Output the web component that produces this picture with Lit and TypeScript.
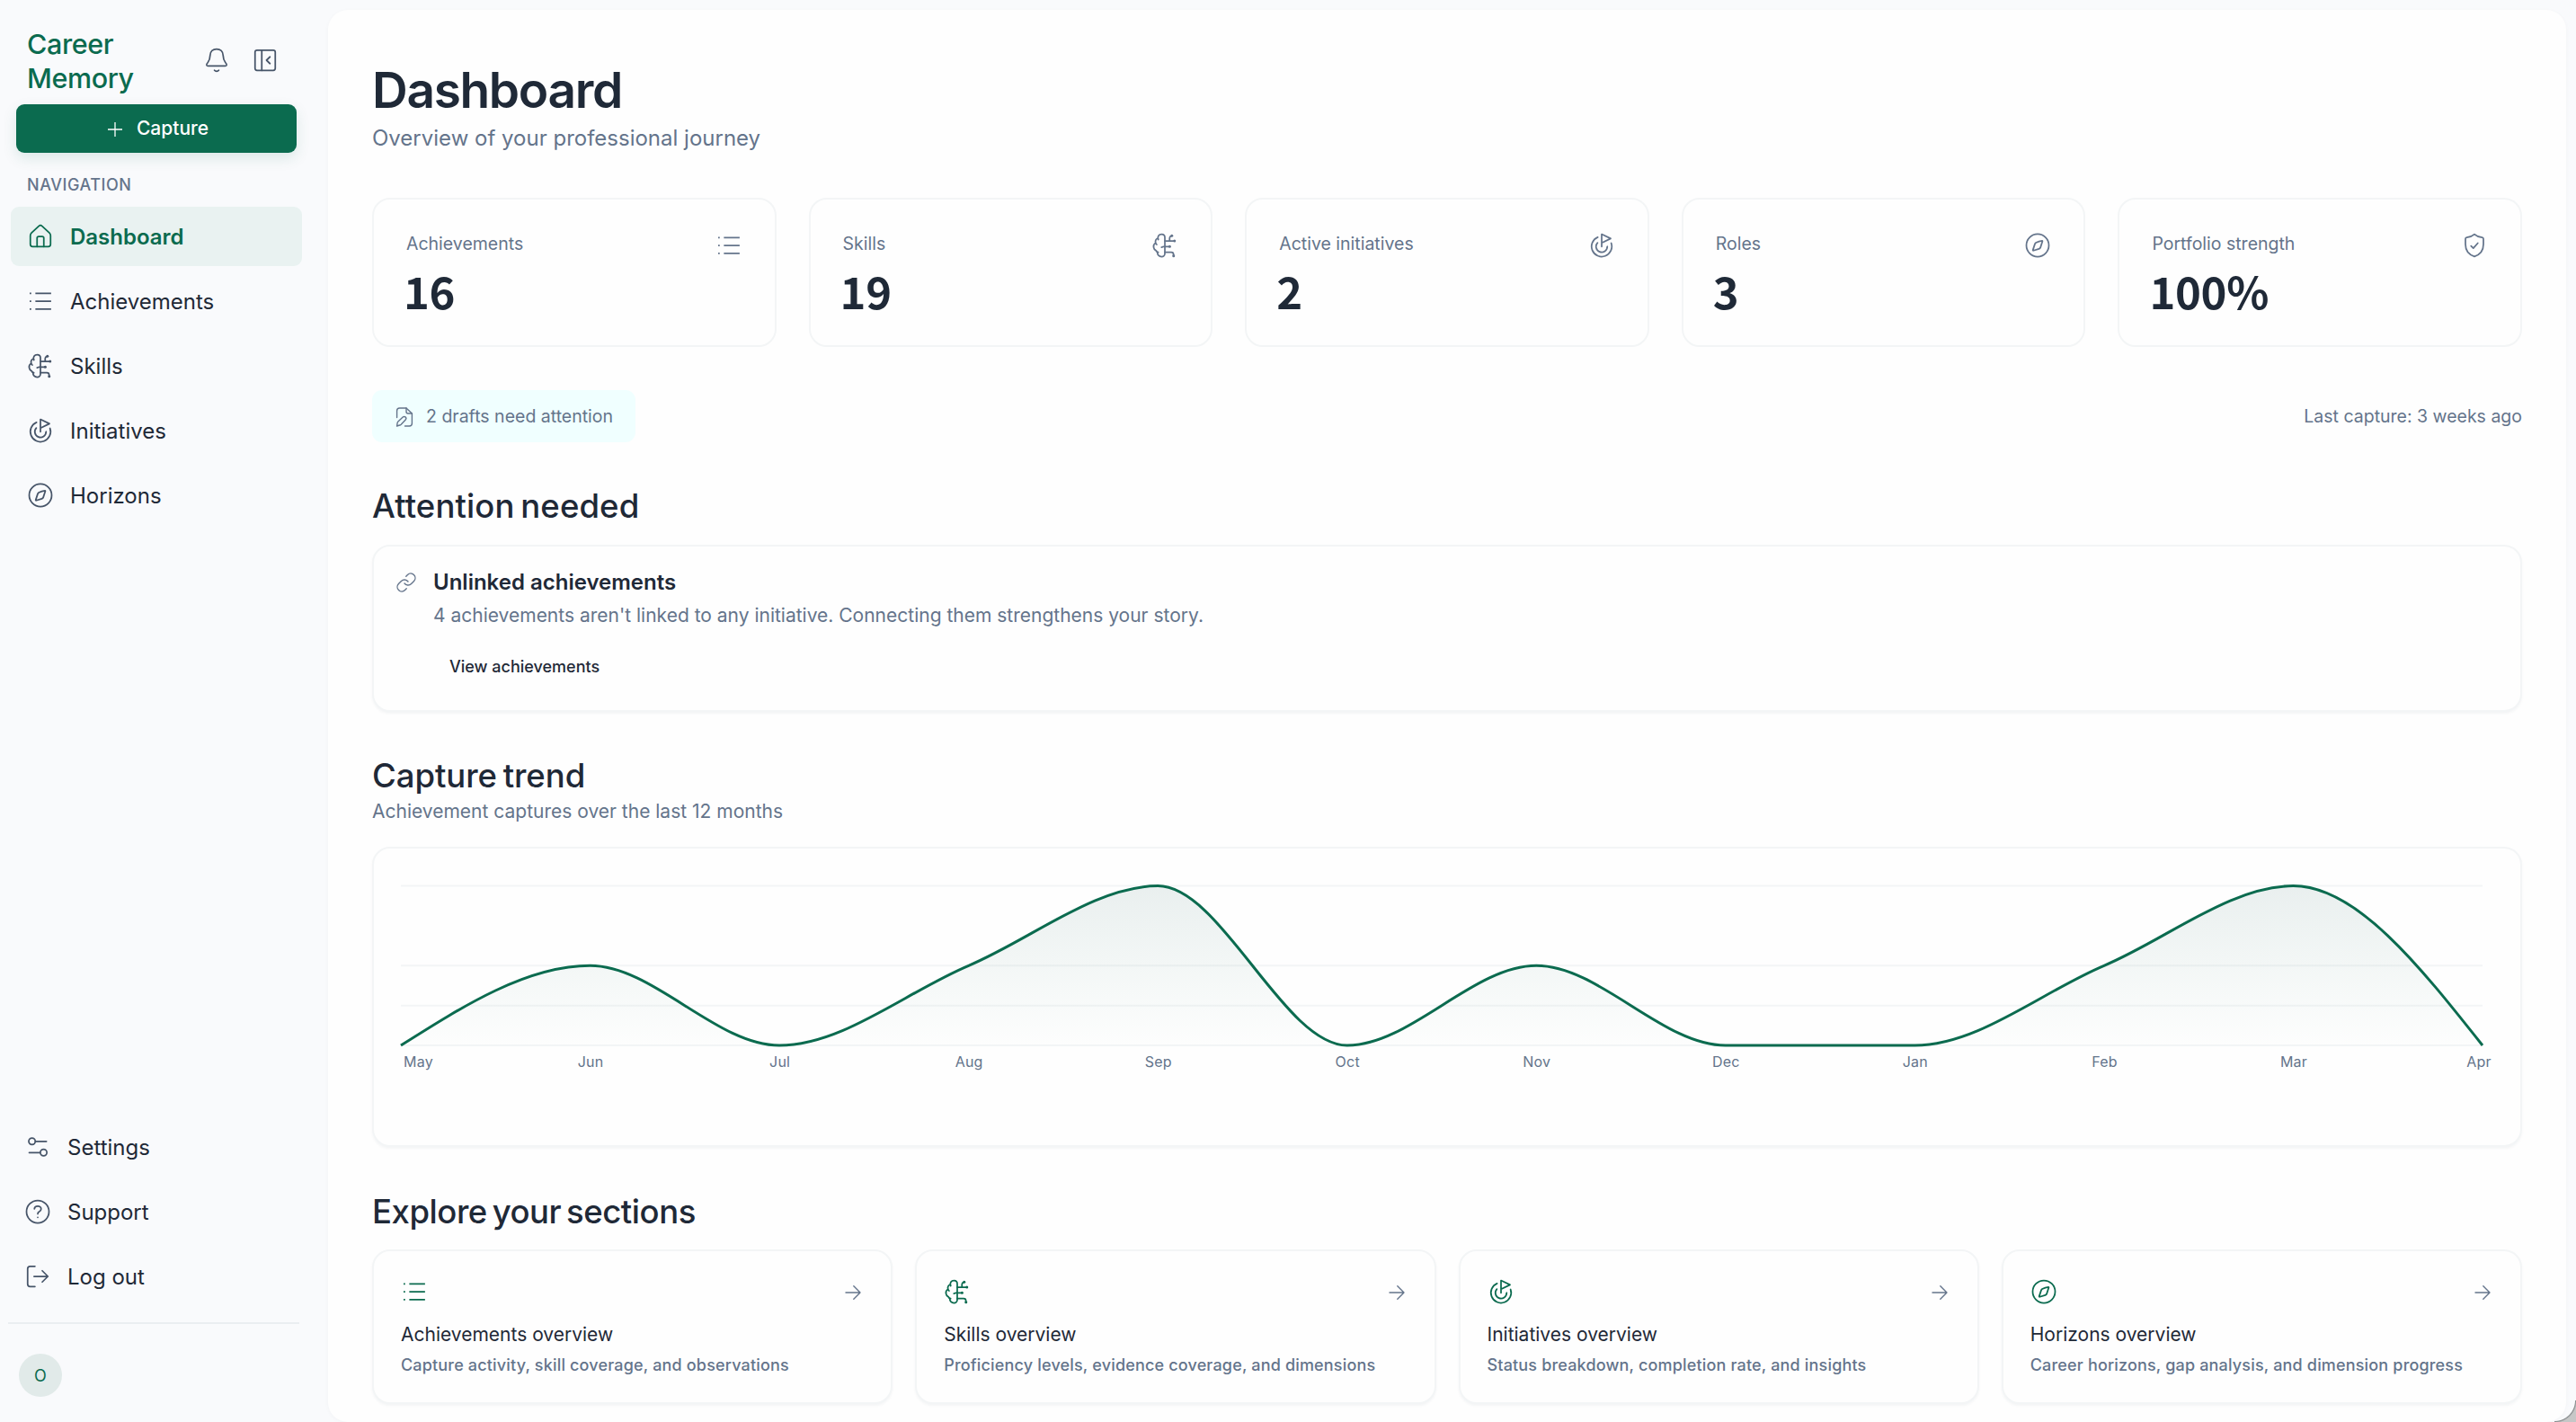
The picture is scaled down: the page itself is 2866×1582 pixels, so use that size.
import { LitElement, html, svg, css, TemplateResult } from "lit";
import { customElement, property } from "lit/decorators.js";

const ICONS: Record<string, TemplateResult> = {
  home: svg`<path d="M3 11.3c0-1 .3-1.7 1-2.4l6.7-6.2c.8-.8 1.8-.8 2.6 0L20 8.9c.7.7 1 1.4 1 2.4V19c0 1.2-.8 2-2 2H5c-1.200 0-2-.8-2-2z"/><path d="M9 21v-7.600c0-.9.500-1.400 1.400-1.400h3.200c.9 0 1.400.5 1.400 1.400V21"/>`,
  list: svg`<path stroke-linecap="butt" d="M7.500 5h14M7.500 12h14M7.500 19h14M2.400 5h1.400M2.400 12h1.400M2.400 19h1.400"/>`,
  brain: svg`<path d="M6.200 6.800C5 4.300 6.800 2 9.100 2 10.700 2 12 3.200 12 5v14.200c0 1.600-1.300 2.800-2.900 2.800-2.200 0-3.900-1.500-3.700-3.900"/><path d="M5.700 5.800C4 6.200 3.200 8 3.800 9.700 2.400 10.600 1.700 12 2 13.700c.2 1.500 1.100 2.500 2.200 3 .3 1 .9 1.400 1.900 1.400M3.800 9.700c.1.700.4 1.200 1 1.600"/><path d="M12 8h8M16.200 8V5.600c0-1.100.5-1.700 1.500-1.900M9 13.600c1 0 1.500-.6 1.900-.6H16M12 18h5.700c1.200 0 2 .7 2 2v.9"/><g fill="currentColor" stroke="none"><circle cx="18.200" cy="3.400" r="1.200"/><circle cx="20.600" cy="8" r="1.200"/><circle cx="16.300" cy="13" r="1.200"/><circle cx="19.800" cy="21.300" r="1.200"/></g>`,
  target: svg`<path d="M12 13V2l8 3.900L12 9.800"/><path d="M8.500 4.700A9 9 0 1 0 20.500 10"/><path d="M8.300 9.700A5 5 0 1 0 17 13"/>`,
  compass: svg`<circle cx="12" cy="12" r="10"/><path d="M16.100 7.900c-1.400.1-4.300 1-5.600 1.700-.5.300-.7.600-.9 1.100l-1.800 5.400c-.1.400.1.600.5.500l4.900-1.500c.7-.2 1.100-.6 1.300-1.200l1.800-5.500c.1-.3 0-.5-.2-.5z"/>`,
  shield: svg`<path d="M12 2.100c1.900 1.700 4.300 2.600 6.700 2.800.9.100 1.300.5 1.300 1.300V11c0 5.600-3 9.200-8 10.900C7 20.200 4 16.600 4 11V6.200c0-.8.4-1.200 1.300-1.300C7.700 4.700 10.100 3.800 12 2.100z"/><path d="M9 12.500l2 2 4-4.500"/>`,
  sliders: svg`<circle cx="6.900" cy="7" r="2.900"/><path d="M10 7h9.700M4.400 17h9.600"/><circle cx="17.200" cy="17" r="2.900"/>`,
  help: svg`<circle cx="12" cy="12" r="10"/><path d="M9 9.500C9.100 8 10.400 7 12 7s3 1.100 3 2.600c0 1.200-.7 1.800-1.700 2.400-.9.500-1.300 1-1.300 1.900M12 17v.01"/>`,
  logout: svg`<path d="M9.500 3H5.200C3.800 3 3 3.800 3 5.200v13.600C3 20.200 3.800 21 5.200 21h4.300M8.700 12H21M16 7l5 5-5 5"/>`,
  bell: svg`<path d="M12 2C8.700 2 6.300 4.300 6.200 7.800 6.100 11 5.700 12.200 4.200 14c-.9 1-1.300 1.700-1.100 2.400.2.500.6.600 1.300.6h15.200c.7 0 1.100-.1 1.300-.6.200-.7-.2-1.400-1.100-2.400-1.500-1.800-1.900-3-2-6.200C17.700 4.300 15.300 2 12 2z"/><path d="M10.100 21c.5.600 1.100.9 1.900.9s1.400-.3 1.900-.9"/>`,
  panel: svg`<rect x="3" y="3" width="18" height="18" rx="1.800"/><path d="M9 3v18M16.300 9L13.200 12l3.100 3"/>`,
  plus: svg`<path stroke-linecap="butt" stroke-width="1.3" d="M12 4v16M4 12h16"/>`,
  draft: svg`<path d="M3.600 12.500V5c0-2 1-3 3-3H14l6.400 6v11c0 2-1 3-3 3H12.500"/><path d="M14 2v4c0 1.400.6 2 2 2h4.300"/><path d="M3.600 22l.5-3.500c.1-.6.3-1 .8-1.500l5.300-4.900c.9-.8 2.200-.8 3 0 .8.800.8 2 0 2.800L8.200 20.200c-.5.500-.9.700-1.500.8z"/>`,
  link: svg`<path d="M10 13a5 5 0 0 0 7.540.540l3-3a5 5 0 0 0-7.070-7.070l-1.720 1.710"/><path d="M14 11a5 5 0 0 0-7.540-.540l-3 3a5 5 0 0 0 7.070 7.070l1.710-1.710"/>`,
  arrow: svg`<path d="M4 12h16M12.800 4.800L20 12l-7.200 7.200"/>`,
};

@customElement("ui-icon")
class UiIcon extends LitElement {
  @property() name = "";
  static styles = css`
    :host { display: block; flex: none; width: 30px; height: 30px; }
    .glyph { display: block; width: 100%; height: 100%; overflow: visible; }
  `;
  render() {
    return html`<svg class="glyph" viewBox="0 0 24 24" fill="none" stroke="currentColor" stroke-width="1.4" stroke-linecap="round" stroke-linejoin="round">${ICONS[this.name]}</svg>`;
  }
}

const MONTHS: [string, number][] = [
  ["May", 0], ["Jun", 2], ["Jul", 0], ["Aug", 2], ["Sep", 4], ["Oct", 0],
  ["Nov", 2], ["Dec", 0], ["Jan", 0], ["Feb", 2], ["Mar", 4], ["Apr", 0],
];

/** Monotone cubic interpolation through evenly spaced points. */
function monotonePath(p: [number, number][]): string {
  const n = p.length;
  const s = p.slice(1).map((q, i) => (q[1] - p[i][1]) / (q[0] - p[i][0]));
  const t: number[] = [];
  for (let i = 1; i < n - 1; i++) {
    const a = s[i - 1], b = s[i];
    t[i] = (Math.sign(a) + Math.sign(b)) * Math.min(Math.abs(a), Math.abs(b), Math.abs(a + b) / 4);
  }
  t[0] = (3 * s[0] - t[1]) / 2;
  t[n - 1] = (3 * s[n - 2] - t[n - 2]) / 2;
  let d = `M${p[0][0]},${p[0][1]}`;
  for (let i = 0; i < n - 1; i++) {
    const h = (p[i + 1][0] - p[i][0]) / 3;
    d += `C${p[i][0] + h},${p[i][1] + h * t[i]} ${p[i + 1][0] - h},${p[i + 1][1] - h * t[i + 1]} ${p[i + 1][0]},${p[i + 1][1]}`;
  }
  return d;
}

@customElement("trend-chart")
class TrendChart extends LitElement {
  static styles = css`
    :host { display: block; }
    .plot { display: block; overflow: visible; }
    .grid { stroke: #f3f5f6; stroke-width: 2; }
    .line { fill: none; stroke: #0b6b4f; stroke-width: 3; }
    .tick { font: 16px Inter, sans-serif; letter-spacing: 0.2px; fill: #64748b; text-anchor: middle; }
  `;
  render() {
    const width = 2316, base = 191, unit = 44.35;
    const pts = MONTHS.map(([, v], i) => [(i * width) / 11, base - v * unit] as [number, number]);
    const d = monotonePath(pts);
    const last = MONTHS.length - 1;
    return html`<svg class="plot" width="2328" height="270" viewBox="0 0 2328 270">
      <defs><linearGradient id="fade" x1="0" y1="0" x2="0" y2="1">
        <stop offset="0" stop-color="#0b4f4a" stop-opacity="0.085"></stop>
        <stop offset="1" stop-color="#0b6b4f" stop-opacity="0.005"></stop>
      </linearGradient></defs>
      ${[0, 1, 2, 4].map((v) => svg`<line class="grid" x1="0" x2=${width} y1=${base - v * unit} y2=${base - v * unit}></line>`)}
      <path d="${d}L${width},${base}L0,${base}Z" fill="url(#fade)"></path>
      <path class="line" d=${d}></path>
      ${MONTHS.map(([m], i) => svg`<text class="tick" x=${i === 0 ? 19.500 : i === last ? width - 4 : pts[i][0] + 0.5} y="215">${m}</text>`)}
    </svg>`;
  }
}

const NAV = [["home", "Dashboard"], ["list", "Achievements"], ["brain", "Skills"], ["target", "Initiatives"], ["compass", "Horizons"]];
const FOOT = [["sliders", "Settings"], ["help", "Support"], ["logout", "Log out"]];
const STATS = [["Achievements", "16", "list"], ["Skills", "19", "brain"], ["Active initiatives", "2", "target"], ["Roles", "3", "compass"], ["Portfolio strength", "100%", "shield"]];
const SECTIONS = [
  ["list", "Achievements overview", "Capture activity, skill coverage, and observations"],
  ["brain", "Skills overview", "Proficiency levels, evidence coverage, and dimensions"],
  ["target", "Initiatives overview", "Status breakdown, completion rate, and insights"],
  ["compass", "Horizons overview", "Career horizons, gap analysis, and dimension progress"],
];

@customElement("app-root")
class AppRoot extends LitElement {
  static styles = css`
    :host { display: block; font-family: Inter, "Liberation Sans", sans-serif; color: #1f2937; }
    * { box-sizing: border-box; }
    h1, h2, h3, p { margin: 0; font-weight: 400; }
    .shell { position: relative; display: flex; width: 2866px; height: 1582px; overflow: hidden; background: #f9fafc; }
    .corner { position: absolute; right: 0; bottom: 0; width: 24px; height: 24px; background: radial-gradient(circle at 0 0, transparent 22.5px, #8b8f90 23.5px, #c6c7c7 25px); }

    .side { width: 365px; flex: none; display: flex; flex-direction: column; padding: 30px 0 28px; }
    .head { display: flex; align-items: center; height: 76px; padding: 0 55px 0 30px; color: #0b6b4f; }
    .brand { flex: 1; font-size: 30.5px; line-height: 38px; font-weight: 500; letter-spacing: -0.4px; }
    .word { display: block; }
    .tools { display: flex; gap: 24px; color: #475569; padding-bottom: 2px; }
    .capture { margin: 10px 35px 0 18px; height: 54px; border-radius: 9px; background: #0b6b4f; color: #fff; display: flex; align-items: center; justify-content: center; gap: 12px; font-size: 21px; font-weight: 500; box-shadow: 0 6px 16px rgba(11, 107, 79, 0.12); }
    .capture ui-icon { width: 24px; height: 24px; margin-top: 2px; }
    .capture .txt { padding-bottom: 1px; }
    .group { margin: 24px 0 12px 30px; font-size: 18px; line-height: 24px; font-weight: 500; letter-spacing: 0.54px; color: #64748b; }
    .nav { display: flex; flex-direction: column; gap: 6px; padding: 0 29px 0 12px; }
    .item { display: flex; align-items: center; gap: 18px; height: 66px; padding-left: 18px; border-radius: 9px; font-size: 24px; }
    .item ui-icon { color: #475569; }
    .active { background: #e9f2f1; color: #0b6b4f; font-weight: 600; }
    .active ui-icon { color: #0b6b4f; }
    .foot { margin-top: auto; padding-left: 9px; }
    .foot .txt { padding-top: 1px; }
    .rule { margin: 18px 32px 33px 9px; height: 2px; background: #eaeef1; }
    .avatar { margin-left: 21px; width: 48px; height: 48px; border-radius: 50%; background: #e1eae9; color: #0b6b4f; font-size: 18px; display: flex; align-items: center; justify-content: center; }

    .main { width: 2490px; margin-top: 11px; padding: 56px 49px 0; background: #fefefe; border-radius: 22px; box-shadow: 0 1px 5px rgba(30, 41, 59, 0.03); }
    .title { font-size: 55px; line-height: 66px; font-weight: 600; letter-spacing: -1.33px; }
    .lead { margin-top: 3px; font-size: 24px; line-height: 36px; color: #64748b; }
    .stats { margin-top: 48px; display: grid; grid-template-columns: repeat(5, 1fr); gap: 36px; }
    .card { border: 2px solid #f3f5f6; border-radius: 20px; background: #fefefe; }
    .raised { box-shadow: 0 2px 3px rgba(30, 41, 59, 0.045); }
    .stat { height: 166px; padding: 36px; display: flex; justify-content: space-between; color: #64748b; }
    .label { font-size: 19.5px; line-height: 26px; }
    .value { margin: 17px 0 0 -3px; font-family: "Noto Sans CJK SC", Inter, sans-serif; font-size: 49px; line-height: 44px; font-weight: 700; color: #1f2937; letter-spacing: -0.3px; }
    .status { margin-top: 48px; display: flex; justify-content: space-between; align-items: center; color: #64748b; font-size: 19.5px; }
    .status .txt { padding-bottom: 1px; }
    .chip { height: 58px; padding: 0 25px 0 24px; border-radius: 11px; background: #f0ffff; display: flex; align-items: center; gap: 12px; }
    .small { width: 24px; height: 24px; }
    .chip .small { margin-top: 2px; }
    .h2 { font-size: 36.5px; line-height: 44px; font-weight: 500; }
    .h-attention { margin-top: 49px; letter-spacing: 0.1px; word-spacing: -3px; }
    .h-trend { margin-top: 49px; letter-spacing: -0.05px; word-spacing: -3px; }
    .h-explore { margin-top: 50px; letter-spacing: -0.45px; word-spacing: -3.500px; }
    .notice { margin-top: 21px; height: 186px; padding: 24px 24px 0; display: flex; gap: 18px; }
    .notice .small { margin-top: 4px; color: #64748b; }
    .strong { font-size: 24px; line-height: 32px; font-weight: 600; }
    .body { margin-top: 6px; font-size: 21px; line-height: 30px; color: #64748b; }
    .ghost { margin-top: 24px; padding-left: 18px; font-size: 18px; line-height: 36px; font-weight: 500; }
    .sub { margin-top: 3px; font-size: 21px; line-height: 30px; color: #64748b; }
    .trend { margin-top: 24px; height: 334px; padding: 28px 30px; }
    .sections { margin-top: 20px; display: grid; grid-template-columns: repeat(4, 1fr); gap: 25px; }
    .section { height: 172px; padding: 30px; }
    .top { display: flex; justify-content: space-between; align-items: center; color: #0b6b4f; }
    .top .small { color: #64748b; margin-top: 2px; }
    .name { margin-top: 18px; font-size: 21px; line-height: 30px; }
    .desc { margin-top: 6px; font-size: 18px; line-height: 26px; font-weight: 500; letter-spacing: 0.17px; color: #64748b; }
  `;

  render() {
    const item = ([icon, text]: string[], active = false) => html`<div class="item ${active ? "active" : ""}"><ui-icon name=${icon}></ui-icon><span class="txt">${text}</span></div>`;
    return html`<div class="shell">
      <aside class="side">
        <div class="head">
          <div class="brand"><span class="word">Career</span><span class="word">Memory</span></div>
          <div class="tools"><ui-icon name="bell"></ui-icon><ui-icon name="panel"></ui-icon></div>
        </div>
        <div class="capture"><ui-icon name="plus"></ui-icon><span class="txt">Capture</span></div>
        <div class="group">NAVIGATION</div>
        <nav class="nav">${NAV.map((n, i) => item(n, i === 0))}</nav>
        <nav class="nav foot">${FOOT.map((n) => item(n))}</nav>
        <div class="rule"></div>
        <div class="avatar">O</div>
      </aside>
      <main class="main">
        <h1 class="title">Dashboard</h1>
        <p class="lead">Overview of your professional journey</p>
        <div class="stats">${STATS.map(([label, value, icon]) => html`<div class="card stat">
          <div><div class="label">${label}</div><div class="value">${value}</div></div>
          <ui-icon name=${icon}></ui-icon>
        </div>`)}</div>
        <div class="status">
          <div class="chip"><ui-icon class="small" name="draft"></ui-icon><span class="txt">2 drafts need attention</span></div>
          <span class="txt">Last capture: 3 weeks ago</span>
        </div>
        <h2 class="h2 h-attention">Attention needed</h2>
        <div class="card raised notice">
          <ui-icon class="small" name="link"></ui-icon>
          <div>
            <h3 class="strong">Unlinked achievements</h3>
            <p class="body">4 achievements aren't linked to any initiative. Connecting them strengthens your story.</p>
            <div class="ghost">View achievements</div>
          </div>
        </div>
        <h2 class="h2 h-trend">Capture trend</h2>
        <p class="sub">Achievement captures over the last 12 months</p>
        <div class="card raised trend"><trend-chart></trend-chart></div>
        <h2 class="h2 h-explore">Explore your sections</h2>
        <div class="sections">${SECTIONS.map(([icon, name, desc]) => html`<div class="card raised section">
          <div class="top"><ui-icon name=${icon}></ui-icon><ui-icon class="small" name="arrow"></ui-icon></div>
          <div class="name">${name}</div>
          <div class="desc">${desc}</div>
        </div>`)}</div>
      </main>
      <div class="corner"></div>
    </div>`;
  }
}
